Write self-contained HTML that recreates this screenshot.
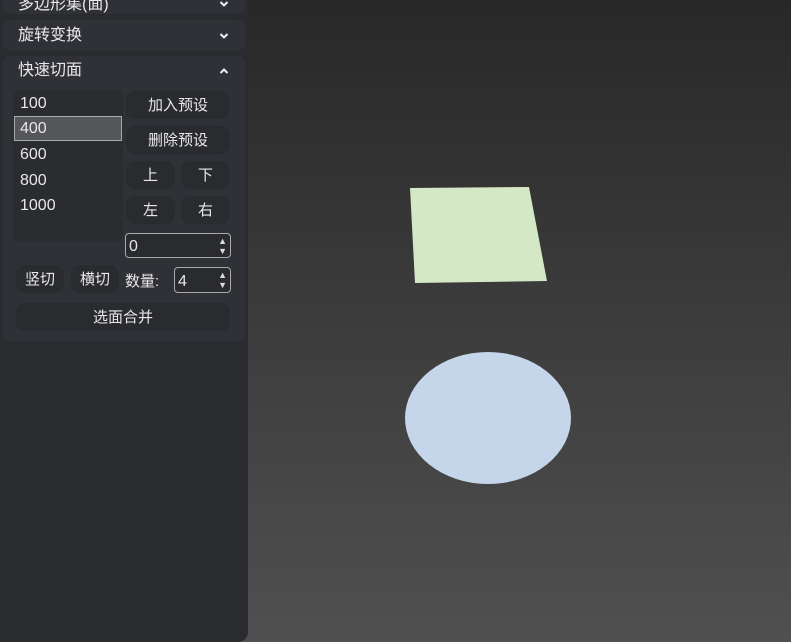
<!DOCTYPE html>
<html><head><style>
body{margin:0;width:791px;height:642px;overflow:hidden;background:linear-gradient(#282828,#505050);font-family:"Liberation Sans","Noto Sans CJK SC",sans-serif;color:#e8e8e8;position:relative}
#side{position:absolute;left:0;top:0;width:248px;height:642px;background:#2a2b2f;border-bottom-right-radius:10px}
.card{position:absolute;left:2px;width:244px;background:#303136;border-radius:10px}
.h{position:absolute;left:16px;font-size:16px;line-height:20px}
.ch{position:absolute;right:17px}
.btn{position:absolute;background:#2a2b2f;border-radius:9px;font-size:15px;text-align:center;line-height:30px;height:28px}
.li{position:absolute;left:20px;font-size:16px}
.inp{position:absolute;border:1px solid #aaa;border-radius:4px;background:#2a2b2f;height:22px;font-size:16px;line-height:22px;padding-left:3px;box-sizing:border-box}
.sp{position:absolute;right:3px;top:2px;font-size:9px;line-height:10px;color:#ddd}
</style></head><body>
<div id="side">
<div class="card" style="top:-16px;height:30px"><span class="h" style="top:11px">多边形集(面)</span>
<svg class="ch" style="top:16px" width="10" height="8"><path d="M1.5 2 L5 5.5 L8.5 2" stroke="#eee" stroke-width="2" fill="none"/></svg></div>
<div class="card" style="top:20px;height:31px"><span class="h" style="top:6px">旋转变换</span>
<svg class="ch" style="top:12px" width="10" height="8"><path d="M1.5 2 L5 5.5 L8.5 2" stroke="#eee" stroke-width="2" fill="none"/></svg></div>
<div class="card" style="top:56px;height:286px">
<span class="h" style="top:5px">快速切面</span>
<svg class="ch" style="top:11px" width="10" height="8"><path d="M1.5 6 L5 2.5 L8.5 6" stroke="#eee" stroke-width="2" fill="none"/></svg>
</div>
<div style="position:absolute;left:13px;top:90px;width:110px;height:152px;background:#2b2c30;border-radius:8px"></div>
<span class="li" style="top:95px">100</span>
<div style="position:absolute;left:14px;top:116px;width:108px;height:25px;background:#55565a;border:1px solid #aaa;box-sizing:border-box"></div>
<span class="li" style="top:120px">400</span>
<span class="li" style="top:146px">600</span>
<span class="li" style="top:172px">800</span>
<span class="li" style="top:197px">1000</span>
<div class="btn" style="left:126px;top:91px;width:104px">加入预设</div>
<div class="btn" style="left:126px;top:126px;width:104px">删除预设</div>
<div class="btn" style="left:126px;top:161px;width:49px">上</div>
<div class="btn" style="left:181px;top:161px;width:49px">下</div>
<div class="btn" style="left:126px;top:196px;width:49px">左</div>
<div class="btn" style="left:181px;top:196px;width:49px">右</div>
<div class="inp" style="left:125px;top:233px;width:106px;height:25px;line-height:25px">0<div class="sp">▲<br>▼</div></div>
<div class="btn" style="left:16px;top:265px;width:48px">竖切</div>
<div class="btn" style="left:71px;top:265px;width:48px">横切</div>
<span style="position:absolute;left:125px;top:270px;font-size:15px">数量:</span>
<div class="inp" style="left:174px;top:267px;width:57px;height:26px;line-height:27px">4<div class="sp">▲<br>▼</div></div>
<div class="btn" style="left:16px;top:303px;width:214px">选面合并</div>
</div>
<svg style="position:absolute;left:0;top:0" width="791" height="642">
<polygon points="410,188 529,187 547,281 415,283" fill="#d4e8c6"/>
<ellipse cx="488" cy="418" rx="83" ry="66" fill="#c5d5ea"/>
</svg>
</body></html>
